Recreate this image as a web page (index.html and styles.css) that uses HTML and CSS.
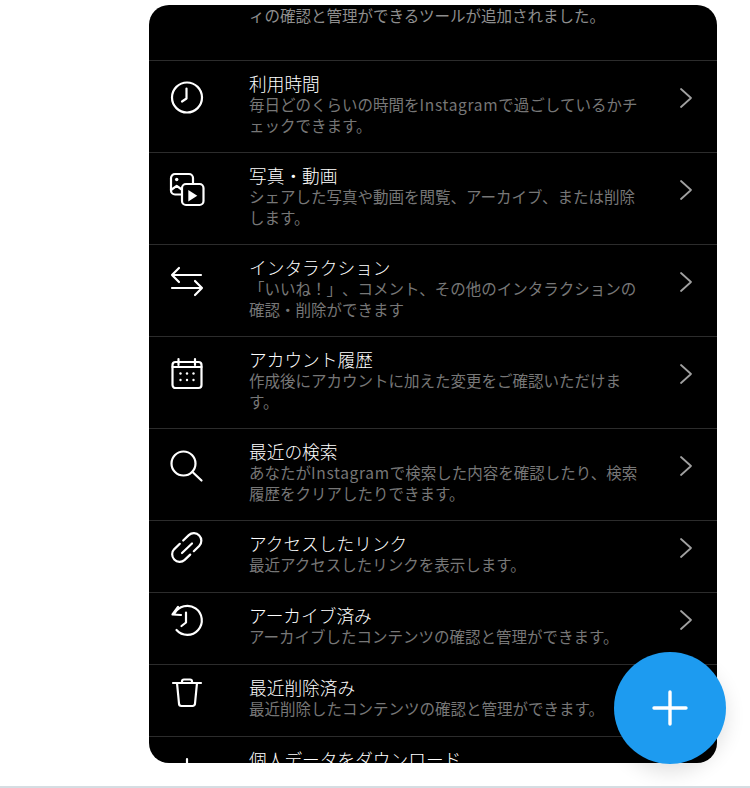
FILE: index.html
```html
<!DOCTYPE html>
<html lang="ja">
    <head>
        <meta charset="UTF-8">
        <meta name="viewport" content="width=device-width, initial-scale=1.0">
        <link rel="stylesheet" href="styles.css">
        <title>アクティビティ</title>
    </head>
    <body>

        <div id="card">
            <div class="intro">ィの確認と管理ができるツールが追加されました。</div>

            <div class="row">
                <svg class="icon" viewBox="0 0 36 36"><circle cx="18" cy="17.500" r="15"/><path d="M17.500 8.500v10l-4.500 3"/></svg>
                <div class="text">
                    <div class="title">利用時間</div>
                    <div class="sub">毎日どのくらいの時間を<span class="latin">Instagram</span>で過ごしているかチェックできます。</div>
                </div>
                <svg class="chevron" viewBox="0 0 14 24"><path d="M2 3l10 9-10 9"/></svg>
            </div>

            <div class="row">
                <svg class="icon" viewBox="0 0 36 36"><path d="M24 11.500V6a4 4 0 0 0-4-4H6a4 4 0 0 0-4 4v12.500a4 4 0 0 0 4 4h6.500"/><path d="M2 18l5.700-4.200 4.300 3.200"/><circle class="dot" cx="7.700" cy="7.500" r="1.700"/><rect x="13" y="12" width="21.500" height="21" rx="4"/><polygon class="dot" points="19.300,18 19.300,29.500 28.300,23.800"/></svg>
                <div class="text">
                    <div class="title">写真・動画</div>
                    <div class="sub">シェアした写真や動画を閲覧、アーカイブ、または削除します。</div>
                </div>
                <svg class="chevron" viewBox="0 0 14 24"><path d="M2 3l10 9-10 9"/></svg>
            </div>

            <div class="row">
                <svg class="icon" viewBox="0 0 36 36"><path d="M32 11H3M10 4l-7 7 7 7"/><path d="M3 24h30M26 17l7 7-7 7"/></svg>
                <div class="text">
                    <div class="title">インタラクション</div>
                    <div class="sub">「いいね！」、コメント、その他のインタラクションの確認・削除ができます</div>
                </div>
                <svg class="chevron" viewBox="0 0 14 24"><path d="M2 3l10 9-10 9"/></svg>
            </div>

            <div class="row">
                <svg class="icon" viewBox="0 0 36 36"><rect x="3.500" y="6" width="29" height="26" rx="3"/><path d="M3.500 11h29M9.500 3v6M26 3v6"/><circle class="dot" cx="11.500" cy="17.500" r="1.200"/><circle class="dot" cx="18" cy="17.500" r="1.200"/><circle class="dot" cx="24.500" cy="17.500" r="1.200"/><circle class="dot" cx="11.500" cy="24" r="1.200"/><circle class="dot" cx="18" cy="24" r="1.200"/><circle class="dot" cx="24.500" cy="24" r="1.200"/></svg>
                <div class="text">
                    <div class="title">アカウント履歴</div>
                    <div class="sub">作成後にアカウントに加えた変更をご確認いただけます。</div>
                </div>
                <svg class="chevron" viewBox="0 0 14 24"><path d="M2 3l10 9-10 9"/></svg>
            </div>

            <div class="row">
                <svg class="icon" viewBox="0 0 36 36"><circle cx="14.500" cy="15.500" r="12"/><path d="M23.500 24l9 8.500"/></svg>
                <div class="text">
                    <div class="title">最近の検索</div>
                    <div class="sub">あなたが<span class="latin">Instagram</span>で検索した内容を確認したり、検索履歴をクリアしたりできます。</div>
                </div>
                <svg class="chevron" viewBox="0 0 14 24"><path d="M2 3l10 9-10 9"/></svg>
            </div>

            <div class="row short">
                <svg class="icon" viewBox="0 0 36 36"><path d="M14.200 10.500L19.800 5.100A7.500 7.500 0 0 1 30.200 15.900L24.800 21.200"/><path d="M10.800 13.800L5.300 19.100A7.500 7.500 0 0 0 15.700 29.900L21.200 24.600"/><path d="M13 23L23 13.500"/></svg>
                <div class="text">
                    <div class="title">アクセスしたリンク</div>
                    <div class="sub">最近アクセスしたリンクを表示します。</div>
                </div>
                <svg class="chevron" viewBox="0 0 14 24"><path d="M2 3l10 9-10 9"/></svg>
            </div>

            <div class="row short">
                <svg class="icon" viewBox="0 0 36 36"><path d="M5.500 11.500A14.500 14.500 0 1 1 7.500 28"/><path d="M9 5l-5.500 7.500 8.500.5"/><path d="M17 10.500v10l-4.500 3.500"/></svg>
                <div class="text">
                    <div class="title">アーカイブ済み</div>
                    <div class="sub">アーカイブしたコンテンツの確認と管理ができます。</div>
                </div>
                <svg class="chevron" viewBox="0 0 14 24"><path d="M2 3l10 9-10 9"/></svg>
            </div>

            <div class="row short">
                <svg class="icon" viewBox="0 0 36 36"><path d="M4 9h28M13 9V7.500a2 2 0 0 1 2-2h6a2 2 0 0 1 2 2V9"/><path d="M8 9l2 20.500a2.500 2.500 0 0 0 2.500 2.500h11a2.500 2.500 0 0 0 2.500-2.500L28 9"/></svg>
                <div class="text">
                    <div class="title">最近削除済み</div>
                    <div class="sub">最近削除したコンテンツの確認と管理ができます。</div>
                </div>
            </div>

            <div class="row short">
                <svg class="icon" viewBox="0 0 36 36"><path d="M18 13v14M11 21l7 7 7-7M4 32h28"/></svg>
                <div class="text">
                    <div class="title">個人データをダウンロード</div>
                </div>
            </div>
        </div>

        <button id="fab">
            <svg viewBox="0 0 36 36"><path d="M18 2v32M2 18h32"/></svg>
        </button>

        <div id="bottomline"></div>

    </body>
</html>
```

FILE: styles.css
```css
body {
    margin: 0;
    padding: 5px 0 0 149px;
    height: 788px;
    box-sizing: border-box;
    background: #fff;
    overflow: hidden;
    font-family: "Noto Sans CJK JP", "Noto Sans", sans-serif;
    text-spacing-trim: space-all;
}

#card {
    width: 568px;
    height: 758px;
    background: #000;
    border-radius: 20px;
    overflow: hidden;
}

.intro {
    height: 55px;
    box-sizing: border-box;
    padding-left: 100px;
    font-size: 15.5px;
    line-height: 21px;
    color: #8e8e8e;
}

.row {
    display: flex;
    align-items: center;
    height: 92px;
    box-sizing: border-box;
    padding: 0 24px 18px 20px;
    border-top: 1px solid #2c2c2c;
}
.row.short {
    height: 72px;
}

.icon {
    width: 36px;
    height: 36px;
    flex-shrink: 0;
    fill: none;
    stroke: #fff;
    stroke-width: 2.2;
    stroke-linecap: round;
    stroke-linejoin: round;
}
.dot {
    fill: #fff;
    stroke: none;
}

.text {
    align-self: flex-start;
    width: 392px;
    margin-left: 44px;
    padding-top: 11px;
}
.title {
    font-size: 17.7px;
    font-weight: 300;
    line-height: 22px;
    color: #fff;
}
.sub {
    font-size: 15.5px;
    line-height: 20.5px;
    color: #777;
}
.latin {
    letter-spacing: 0.7px;
}

.chevron {
    width: 14px;
    height: 24px;
    margin-left: auto;
    fill: none;
    stroke: #a0a0a0;
    stroke-width: 1.8;
    stroke-linecap: round;
    stroke-linejoin: round;
}

#fab {
    position: absolute;
    left: 614px;
    top: 652px;
    width: 112px;
    height: 112px;
    padding: 0;
    border: none;
    border-radius: 50%;
    background: #1d9bf0;
    box-shadow: 0 8px 20px rgba(0, 0, 0, 0.12);
    display: flex;
    align-items: center;
    justify-content: center;
}
#fab svg {
    width: 36px;
    height: 36px;
    fill: none;
    stroke: #fff;
    stroke-width: 3.4;
    stroke-linecap: round;
}

#bottomline {
    position: absolute;
    left: 0;
    right: 0;
    top: 786px;
    height: 2px;
    background: #d5dde2;
}
```
